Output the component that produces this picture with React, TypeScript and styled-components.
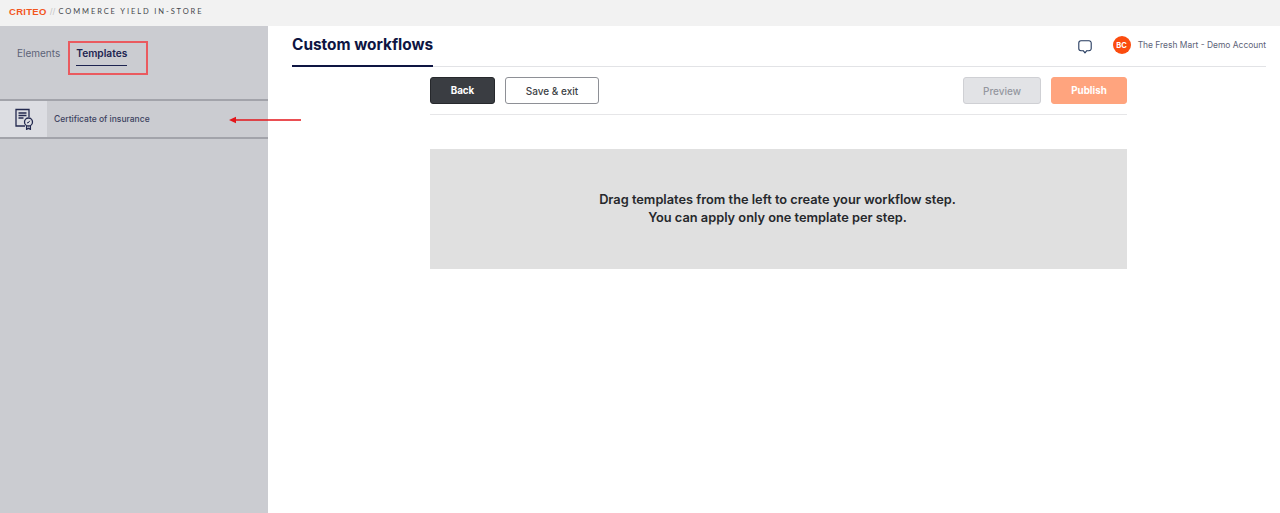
import React from 'react'
import styled, { createGlobalStyle } from 'styled-components'

const GlobalStyle = createGlobalStyle`
  html, body {
    margin: 0;
    padding: 0;
    background: #fff;
    font-family: Inter, "Liberation Sans", sans-serif;
  }
`

const Page = styled.div`
  width: 1280px;
  height: 513px;
  overflow: hidden;
  display: flex;
  flex-direction: column;
`

const TopBar = styled.header`
  height: 26px;
  background: #f2f2f2;
  display: flex;
  align-items: center;
  padding: 0 0 4px 9px;
  box-sizing: border-box;
`

const Logo = styled.span`
  font-family: "Liberation Sans", sans-serif;
  font-weight: 700;
  font-size: 9.5px;
  letter-spacing: 0.3px;
  color: #f2561d;
`

const Slashes = styled.span`
  font-size: 8px;
  color: #c4c4c4;
  margin: 0 3px 0 3px;
`

const Product = styled.span`
  font-family: Lato, sans-serif;
  font-size: 7.5px;
  font-weight: 400;
  letter-spacing: 1.9px;
  color: #45474c;
`

const Body = styled.div`
  flex: 1;
  display: flex;
  min-height: 0;
`

const Sidebar = styled.aside`
  position: relative;
  width: 268px;
  background: #cbccd1;
  flex-shrink: 0;
`

const Tabs = styled.div`
  height: 73px;
  display: flex;
  gap: 16px;
  padding: 20px 0 0 17px;
  box-sizing: border-box;
`

const Tab = styled.div<{ $active?: boolean }>`
  height: 19px;
  font-size: ${(p) => (p.$active ? '10.2px' : '10px')};
  line-height: 15px;
  white-space: nowrap;
  font-weight: ${(p) => (p.$active ? 600 : 400)};
  color: ${(p) => (p.$active ? '#1d2450' : '#5d6378')};
  border-bottom: ${(p) => (p.$active ? '1px solid #1d2450' : '1px solid transparent')};
`

const TemplateRow = styled.div`
  height: 36px;
  display: flex;
  align-items: stretch;
  border-top: 2px solid #a2a3aa;
  border-bottom: 2px solid #a2a3aa;
`

const IconCell = styled.div`
  width: 47px;
  background: #dcdde2;
  display: flex;
  align-items: center;
  justify-content: center;
`

const RowLabel = styled.div`
  padding-left: 7px;
  display: flex;
  align-items: center;
  font-size: 8.5px;
  font-weight: 500;
  color: #3c4260;
`

const RedBox = styled.div`
  position: absolute;
  left: 68px;
  top: 15px;
  width: 76px;
  height: 30px;
  border: 2px solid #ea5a5f;
`

const Arrow = styled.svg`
  position: absolute;
  left: 228px;
  top: 88px;
`

const Main = styled.main`
  flex: 1;
  display: flex;
  flex-direction: column;
  padding: 0 14px 0 24px;
`

const Header = styled.div`
  height: 41px;
  box-sizing: border-box;
  display: flex;
  justify-content: space-between;
  border-bottom: 1px solid #e2e3e6;
`

const Title = styled.h1`
  margin: 0;
  width: 141px;
  height: 41px;
  box-sizing: border-box;
  padding-top: 9px;
  font-size: 15.4px;
  line-height: 20px;
  font-weight: 700;
  white-space: nowrap;
  color: #0e1542;
  border-bottom: 2px solid #0e1542;
`

const Account = styled.div`
  display: flex;
  align-items: center;
  height: 38px;
`

const ChatIcon = styled.svg`
  margin-top: 3px;
`

const Avatar = styled.div`
  width: 18px;
  height: 18px;
  border-radius: 50%;
  background: #fb4c0f;
  color: #fff;
  font-size: 7.5px;
  font-weight: 700;
  display: flex;
  align-items: center;
  justify-content: center;
  margin: 0 7px 0 21px;
`

const AccountName = styled.span`
  font-size: 8.45px;
  color: #5d6378;
  white-space: nowrap;
`

const Content = styled.div`
  width: 697px;
  margin-left: 138px;
`

const Toolbar = styled.div`
  height: 48px;
  box-sizing: border-box;
  padding-top: 10px;
  display: flex;
  gap: 10px;
  border-bottom: 1px solid #e6e6e8;
`

const Spacer = styled.div`
  flex: 1;
`

const Button = styled.button<{ $variant: 'dark' | 'outline' | 'muted' | 'orange' }>`
  height: 27px;
  box-sizing: border-box;
  border-radius: 3px;
  font-family: inherit;
  padding: 0;
  font-size: ${(p) => (p.$variant === 'outline' || p.$variant === 'muted' ? '10px' : '9.8px')};
  width: ${(p) => ({ dark: '65px', outline: '94px', muted: '78px', orange: '76px' })[p.$variant]};
  font-weight: ${(p) => (p.$variant === 'outline' || p.$variant === 'muted' ? 500 : 700)};
  color: ${(p) => ({ dark: '#fff', outline: '#3c3f45', muted: '#94979f', orange: '#fff' })[p.$variant]};
  background: ${(p) => ({ dark: '#3a3d42', outline: '#fff', muted: '#e2e3e6', orange: '#ffa47e' })[p.$variant]};
  border: 1px solid ${(p) => ({ dark: '#26282c', outline: '#8e9096', muted: '#cfd0d4', orange: '#ffa47e' })[p.$variant]};
`

const DropZone = styled.div`
  margin-top: 34px;
  height: 120px;
  padding-right: 2px;
  box-sizing: border-box;
  background: #e0e0e0;
  display: flex;
  align-items: center;
  justify-content: center;
  text-align: center;
  font-size: 12.8px;
  line-height: 18px;
  font-weight: 600;
  color: #26282c;
`

const App: React.FC = () => {
  return (
    <Page>
      <GlobalStyle />
      <TopBar>
        <Logo>CRITEO</Logo>
        <Slashes>//</Slashes>
        <Product>COMMERCE YIELD IN-STORE</Product>
      </TopBar>
      <Body>
        <Sidebar>
          <Tabs>
            <Tab>Elements</Tab>
            <Tab $active>Templates</Tab>
          </Tabs>
          <TemplateRow>
            <IconCell>
              <svg width="20" height="22" viewBox="0 0 20 22" fill="none" stroke="#23294f" strokeWidth="1.3">
                <path d="M11 18H2V1.500h13V9" />
                <path d="M4.500 5h8M4.500 7.500h8M4.500 10h5" />
                <circle cx="14.500" cy="14" r="4" />
                <path d="M13 14.600l1 .4 1.800-2.200" strokeWidth="1" />
                <path d="M12.600 18v3.300l1.900-1 1.900 1V18" />
              </svg>
            </IconCell>
            <RowLabel>Certificate of insurance</RowLabel>
          </TemplateRow>
          <RedBox />
          <Arrow width="74" height="12" viewBox="0 0 74 12">
            <path d="M1 6l7-3.200v2.500h65v1.400H8v2.500z" fill="#e3161b" />
          </Arrow>
        </Sidebar>
        <Main>
          <Header>
            <Title>Custom workflows</Title>
            <Account>
              <ChatIcon width="14" height="14" viewBox="0 0 14 14" fill="none" stroke="#23395d" strokeWidth="1.1">
                <path d="M3 .8h8a2.200 2.200 0 0 1 2.200 2.200v5.600a2.200 2.200 0 0 1-2.200 2.200H8.600L7 12.800l-1.600-2H3A2.200 2.200 0 0 1 .8 8.600V3A2.200 2.200 0 0 1 3 .8z" />
              </ChatIcon>
              <Avatar>BC</Avatar>
              <AccountName>The Fresh Mart - Demo Account</AccountName>
            </Account>
          </Header>
          <Content>
            <Toolbar>
              <Button $variant="dark">Back</Button>
              <Button $variant="outline">Save &amp; exit</Button>
              <Spacer />
              <Button $variant="muted">Preview</Button>
              <Button $variant="orange">Publish</Button>
            </Toolbar>
            <DropZone>
              Drag templates from the left to create your workflow step.
              <br />
              You can apply only one template per step.
            </DropZone>
          </Content>
        </Main>
      </Body>
    </Page>
  )
}

export default App
